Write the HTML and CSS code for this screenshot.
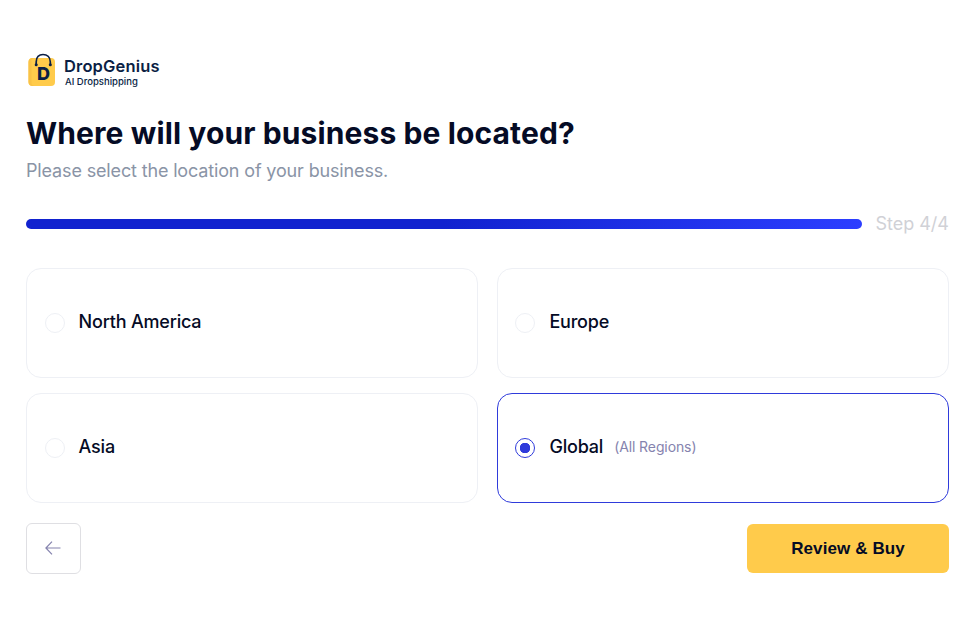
FILE: index.html
```
<!DOCTYPE html>
<html lang="en">
<head>
    <meta charset="UTF-8">
    <meta name="viewport" content="width=device-width, initial-scale=1.0">
    <title>DropGenius</title>
    <link rel="stylesheet" href="styles.css">
</head>
<body>

    <!-- Logo -->
    <header class="logo">
        <div class="logo-mark">
            <svg width="28" height="34" viewBox="0 0 28 34" fill="none">
                <rect x=".5" y="5" width="26.500" height="28" rx="4" fill="#ffcb4b"/>
                <path d="M5 5H6.500A3 3 0 0 0 3.500 9V29A3.500 3.500 0 0 0 6.500 33H5A4 4 0 0 1 .5 29V9A4 4 0 0 1 5 5Z" fill="#f9c246"/>
                <path d="M8.200 12V9C8.200 4 11 1.500 15 1.500S22.300 4 22.300 9V12" stroke="#0b1f45" stroke-width="1.700" stroke-linecap="round"/>
                <circle cx="8.200" cy="11.700" r="1.500" fill="#0b1f45"/>
                <circle cx="22.300" cy="11.700" r="1.500" fill="#0b1f45"/>
            </svg>
            <span class="logo-letter">D</span>
        </div>
        <div class="logo-text">
            <div class="logo-name">DropGenius</div>
            <div class="logo-tagline">AI Dropshipping</div>
        </div>
    </header>

    <h1>Where will your business be located?</h1>
    <p class="subtitle">Please select the location of your business.</p>

    <div class="progress">
        <div class="progress-bar"></div>
        <span class="progress-step">Step 4/4</span>
    </div>

    <form id="regionForm">
        <div class="options">
            <label class="option">
                <input type="radio" name="region" value="north-america">
                <span class="option-name">North America</span>
            </label>
            <label class="option">
                <input type="radio" name="region" value="europe">
                <span class="option-name">Europe</span>
            </label>
            <label class="option">
                <input type="radio" name="region" value="asia">
                <span class="option-name">Asia</span>
            </label>
            <label class="option">
                <input type="radio" name="region" value="global" checked>
                <span class="option-name">Global</span>
                <span class="option-note">(All Regions)</span>
            </label>
        </div>

        <div class="actions">
            <button type="button" class="back-button" aria-label="Back">
                <svg width="16" height="14" viewBox="0 0 16 14" fill="none" stroke="#8583ae" stroke-width="1.200">
                    <path d="M15.500 7H1M7 .7L.9 7L7 13.300"/>
                </svg>
            </button>
            <button type="submit" class="buy-button">Review &amp; Buy</button>
        </div>
    </form>

</body>
</html>
```

FILE: styles.css
```
* {
    box-sizing: border-box;
}
body {
    font-family: Inter, sans-serif;
    margin: 0;
    padding: 53px 28px 0 26px;
    background-color: #fff;
    color: #050b25;
}
.logo {
    display: flex;
    height: 34px;
    margin-left: 2px;
    color: #0b1f45;
}
.logo-mark {
    position: relative;
    width: 28px;
}
.logo-mark svg {
    display: block;
}
.logo-letter {
    position: absolute;
    top: 11px;
    left: 9px;
    font-size: 18px;
    line-height: 19px;
    font-weight: 800;
}
.logo-text {
    padding: 4px 0 0 8px;
}
.logo-name {
    font-size: 16.5px;
    line-height: 19px;
    font-weight: 600;
    letter-spacing: 0.15px;
}
.logo-tagline {
    margin-left: 1px;
    font-size: 9.5px;
    line-height: 11px;
    font-weight: 500;
}
h1 {
    margin: 28px 0 0;
    font-size: 30px;
    line-height: 36px;
    font-weight: 700;
    letter-spacing: 0.11px;
}
.subtitle {
    margin: 8px 0 0;
    font-size: 18px;
    line-height: 24px;
    letter-spacing: -0.15px;
    color: #8a94a6;
}
.progress {
    display: flex;
    align-items: center;
    gap: 13px;
    height: 24px;
    margin-top: 29px;
}
.progress-bar {
    flex: 1;
    height: 10px;
    border-radius: 5px;
    background: linear-gradient(90deg, #1122cf 0%, #1122cf 50%, #2c3eff 100%);
}
.progress-step {
    padding-bottom: 2px;
    font-size: 18px;
    color: #d0d1d6;
}
.options {
    display: grid;
    grid-template-columns: 1fr 1fr;
    gap: 15px 18.6px;
    margin-top: 32px;
}
.option {
    display: flex;
    align-items: center;
    height: 110px;
    padding: 0 17.6px;
    border: 1px solid #eef0f5;
    border-radius: 15px;
    cursor: pointer;
}
.option:has(input:checked) {
    border-color: #2f3bdb;
}
.option input {
    appearance: none;
    width: 20px;
    height: 20px;
    margin: 0 14px 0 0;
    border: 1px solid #eef0f5;
    border-radius: 50%;
}
.option input:checked {
    border-color: #2f3bdb;
    background: radial-gradient(circle, #2f3bdb 5px, transparent 5.5px);
}
.option-name {
    padding-bottom: 3px;
    font-size: 18px;
    font-weight: 500;
    letter-spacing: -0.2px;
}
.option-note {
    margin-left: 11px;
    padding-bottom: 3px;
    font-size: 14px;
    letter-spacing: -0.1px;
    color: #8583ae;
}
.actions {
    display: flex;
    align-items: center;
    justify-content: space-between;
    margin-top: 20px;
}
.back-button {
    display: flex;
    align-items: center;
    justify-content: center;
    width: 55px;
    height: 51px;
    padding: 0 2px 2px 0;
    border: 1px solid #dfdfe3;
    border-radius: 6px;
    background-color: #fff;
    cursor: pointer;
}
.buy-button {
    width: 202px;
    height: 49px;
    padding: 0;
    border: none;
    border-radius: 6px;
    background-color: #ffcb4b;
    color: #050b25;
    font-family: "Liberation Sans", Arial, sans-serif;
    font-size: 17px;
    font-weight: 700;
    letter-spacing: 0.1px;
    cursor: pointer;
}
```
